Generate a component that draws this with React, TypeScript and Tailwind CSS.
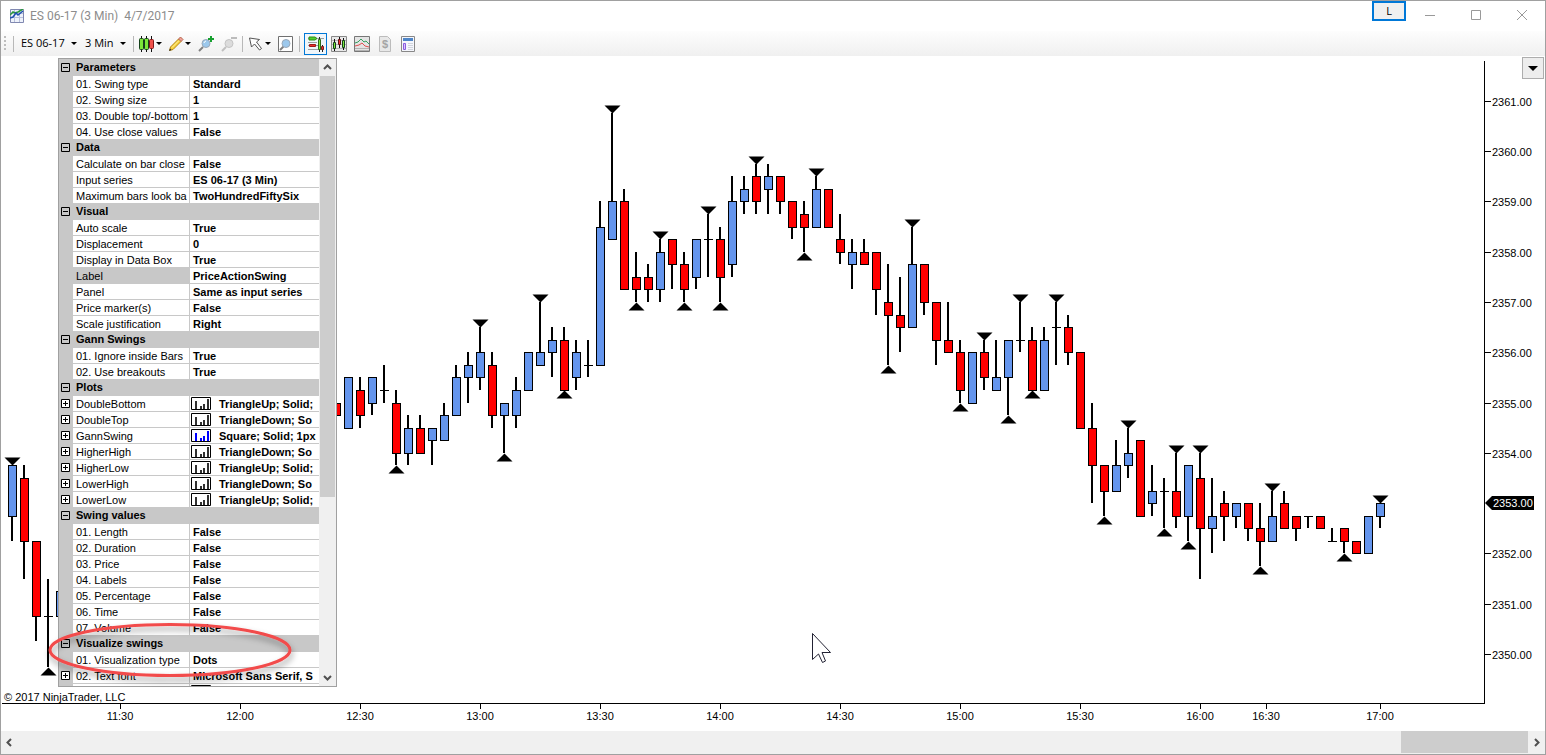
import React, { useState } from 'react';

type Candle = [slot: number, open: number, high: number, low: number, close: number, swing?: 'H' | 'L'];

// Prices are stored as quarter-point ticks above 2350.00
const candles: Candle[] = [
  [0, 11, 15, 9, 15, 'H'], [1, 14, 15, 6, 9], [2, 9, 9, 1, 3], [3, 3, 6, -1, 3, 'L'], [4, 3, 5, 3, 5],
  [27, 20, 20, 19, 19], [28, 18, 22, 18, 22], [29, 21, 22, 18, 19], [30, 20, 22, 19, 22], [31, 21, 23, 20, 21],
  [32, 20, 21, 15, 16, 'L'], [33, 16, 19, 15, 18], [34, 18, 19, 16, 16], [35, 17, 18, 15, 18], [36, 17, 20, 17, 19],
  [37, 19, 23, 19, 22], [38, 22, 24, 20, 23], [39, 22, 26, 21, 24, 'H'], [40, 23, 24, 18, 19], [41, 19, 20, 16, 20, 'L'],
  [42, 19, 22, 18, 21], [43, 21, 24, 21, 24], [44, 23, 28, 23, 24, 'H'], [45, 24, 26, 22, 25], [46, 25, 26, 21, 21, 'L'],
  [47, 22, 25, 21, 24], [48, 23, 25, 22, 23], [49, 23, 36, 23, 34], [50, 33, 43, 33, 36, 'H'], [51, 36, 37, 29, 29],
  [52, 30, 32, 28, 29, 'L'], [53, 30, 31, 28, 29], [54, 29, 33, 28, 32, 'H'], [55, 33, 33, 29, 31], [56, 31, 32, 28, 29, 'L'],
  [57, 30, 33, 29, 33], [58, 33, 35, 30, 33, 'H'], [59, 33, 34, 28, 30, 'L'], [60, 31, 38, 30, 36], [61, 36, 38, 35, 37],
  [62, 38, 39, 35, 36, 'H'], [63, 37, 39, 35, 38], [64, 38, 38, 35, 36], [65, 36, 36, 33, 34], [66, 35, 36, 32, 34, 'L'],
  [67, 34, 38, 34, 37, 'H'], [68, 37, 37, 34, 34], [69, 33, 35, 31, 32], [70, 31, 33, 29, 32], [71, 32, 33, 31, 31],
  [72, 32, 32, 27, 29], [73, 28, 31, 23, 27, 'L'], [74, 27, 30, 24, 26], [75, 26, 34, 26, 31, 'H'], [76, 31, 31, 27, 28],
  [77, 28, 28, 23, 25], [78, 25, 28, 24, 24], [79, 24, 25, 20, 21, 'L'], [80, 20, 24, 20, 24], [81, 24, 25, 21, 22, 'H'],
  [82, 21, 25, 21, 22], [83, 22, 25, 19, 25, 'L'], [84, 25, 28, 24, 25, 'H'], [85, 25, 26, 21, 21, 'L'], [86, 21, 26, 21, 25],
  [87, 26, 28, 23, 26, 'H'], [88, 26, 27, 23, 24], [89, 24, 24, 18, 18], [90, 18, 20, 12, 15], [91, 15, 15, 11, 13, 'L'],
  [92, 13, 17, 13, 15], [93, 15, 18, 14, 16, 'H'], [94, 17, 17, 11, 11], [95, 12, 15, 11, 13], [96, 13, 14, 10, 13, 'L'],
  [97, 13, 16, 10, 11, 'H'], [98, 11, 15, 9, 15, 'L'], [99, 14, 16, 6, 10, 'H'], [100, 10, 14, 8, 11], [101, 12, 13, 9, 11],
  [102, 11, 12, 10, 12], [103, 12, 12, 9, 10], [104, 10, 12, 7, 9, 'L'], [105, 9, 13, 9, 11, 'H'], [106, 12, 13, 10, 10],
  [107, 11, 11, 9, 10], [108, 11, 11, 10, 11], [109, 11, 11, 10, 10], [110, 9, 10, 9, 9], [111, 10, 10, 8, 9, 'L'],
  [112, 9, 9, 8, 8], [113, 8, 11, 8, 11], [114, 11, 12, 10, 12, 'H'],
];

const slotX = (slot: number) => 12 + slot * 12;
const tickY = (tick: number) => Math.round(654 - tick * 12.57);

const priceLabels = [2361, 2360, 2359, 2358, 2357, 2356, 2355, 2354, 2352, 2351, 2350];

const timeLabels = [
  { x: 120, text: '11:30' },
  { x: 240, text: '12:00' },
  { x: 360, text: '12:30' },
  { x: 480, text: '13:00' },
  { x: 600, text: '13:30' },
  { x: 720, text: '14:00' },
  { x: 840, text: '14:30' },
  { x: 960, text: '15:00' },
  { x: 1080, text: '15:30' },
  { x: 1200, text: '16:00' },
  { x: 1266, text: '16:30' },
  { x: 1380, text: '17:00' },
];

type Property = { name: string; value: string; plot?: string; expandable?: boolean; selected?: boolean };
type Category = { title: string; items: Property[] };

const categories: Category[] = [
  {
    title: 'Parameters',
    items: [
      { name: '01. Swing type', value: 'Standard' },
      { name: '02. Swing size', value: '1' },
      { name: '03. Double top/-bottom', value: '1' },
      { name: '04. Use close values', value: 'False' },
    ],
  },
  {
    title: 'Data',
    items: [
      { name: 'Calculate on bar close', value: 'False' },
      { name: 'Input series', value: 'ES 06-17 (3 Min)' },
      { name: 'Maximum bars look ba', value: 'TwoHundredFiftySix' },
    ],
  },
  {
    title: 'Visual',
    items: [
      { name: 'Auto scale', value: 'True' },
      { name: 'Displacement', value: '0' },
      { name: 'Display in Data Box', value: 'True' },
      { name: 'Label', value: 'PriceActionSwing', selected: true },
      { name: 'Panel', value: 'Same as input series' },
      { name: 'Price marker(s)', value: 'False' },
      { name: 'Scale justification', value: 'Right' },
    ],
  },
  {
    title: 'Gann Swings',
    items: [
      { name: '01. Ignore inside Bars', value: 'True' },
      { name: '02. Use breakouts', value: 'True' },
    ],
  },
  {
    title: 'Plots',
    items: [
      { name: 'DoubleBottom', value: 'TriangleUp; Solid;', plot: '#303030', expandable: true },
      { name: 'DoubleTop', value: 'TriangleDown; So', plot: '#303030', expandable: true },
      { name: 'GannSwing', value: 'Square; Solid; 1px', plot: '#0000ff', expandable: true },
      { name: 'HigherHigh', value: 'TriangleDown; So', plot: '#303030', expandable: true },
      { name: 'HigherLow', value: 'TriangleUp; Solid;', plot: '#303030', expandable: true },
      { name: 'LowerHigh', value: 'TriangleDown; So', plot: '#303030', expandable: true },
      { name: 'LowerLow', value: 'TriangleUp; Solid;', plot: '#303030', expandable: true },
    ],
  },
  {
    title: 'Swing values',
    items: [
      { name: '01. Length', value: 'False' },
      { name: '02. Duration', value: 'False' },
      { name: '03. Price', value: 'False' },
      { name: '04. Labels', value: 'False' },
      { name: '05. Percentage', value: 'False' },
      { name: '06. Time', value: 'False' },
      { name: '07. Volume', value: 'False' },
    ],
  },
  {
    title: 'Visualize swings',
    items: [
      { name: '01. Visualization type', value: 'Dots' },
      { name: '02. Text font', value: 'Microsoft Sans Serif, S', expandable: true },
      { name: '', value: '', plot: '#303030' },
    ],
  },
];

/* ---------- small pieces ---------- */

function Caret() {
  return (
    <svg width="6" height="3" viewBox="0 0 6 3" className="shrink-0" aria-hidden="true">
      <path d="M0 0h6L3 3z" fill="#000" />
    </svg>
  );
}

function Separator() {
  return (
    <div className="flex w-[5px] justify-center">
      <div className="h-4 w-px bg-[#b8b8b8]" />
    </div>
  );
}

function Chevron({ d }: { d: string }) {
  return (
    <svg width="9" height="9" viewBox="0 0 9 9" fill="none" stroke="#505050" strokeWidth="2" aria-hidden="true">
      <path d={d} />
    </svg>
  );
}

function ToggleBox({ label, plus = false, onClick }: { label: string; plus?: boolean; onClick?: () => void }) {
  return (
    <button type="button" aria-label={label} onClick={onClick} className="block">
      <svg width="9" height="9" viewBox="0 0 9 9" fill={plus ? '#fff' : 'none'} stroke="#000" className="block" aria-hidden="true">
        <path d="M.5 .5h8v8h-8z" />
        <path d="M2 4.5h5" />
        {plus && <path d="M4.5 2v5" />}
      </svg>
    </button>
  );
}

function Icon({ children }: { children: React.ReactNode }) {
  return (
    <svg width="16" height="16" viewBox="0 0 16 16" fill="none" className="shrink-0" aria-hidden="true">
      {children}
    </svg>
  );
}

function ToolButton({ label, children, menu = false }: { label: string; children: React.ReactNode; menu?: boolean }) {
  return (
    <button
      type="button"
      aria-label={label}
      className={menu ? 'flex h-[22px] w-[29px] items-center gap-px pl-[3px]' : 'flex h-[22px] w-[23px] items-center justify-center'}
    >
      {children}
      {menu && <Caret />}
    </button>
  );
}

function PlotIcon({ color }: { color: string }) {
  return (
    <svg width="20" height="13" viewBox="0 0 20 13" className="shrink-0" aria-hidden="true">
      <path d="M.5 .5h19v12H.5z" fill="#fff" stroke="#000" />
      <path d="M5 4v8M10 9v3M13 7v5M17 2v10" stroke={color} strokeWidth="2" fill="none" />
    </svg>
  );
}

/* ---------- window chrome ---------- */

function TitleBar() {
  return (
    <header className="flex h-[30px] shrink-0 items-start bg-white">
      <div className="flex h-full flex-1 items-center gap-[6px] pl-[9px] font-[Roboto,sans-serif] text-xs text-[#8c8c8c]">
        <svg width="14" height="14" viewBox="0 0 14 14" fill="none" aria-hidden="true">
          <path d="M.5 .5h13v13H.5z" fill="#eef2fb" stroke="#8088b0" />
          <path d="M1 4.500h12M1 8.500h12M4.500 1v12M9.500 1v12" stroke="#b8c0dc" />
          <path d="M0 6l3-3 2 1 3-1 5-3" stroke="#2a9a3a" strokeWidth="1.500" />
          <path d="M0 9l3-1 3-4 2 2 5-4" stroke="#2050b0" strokeWidth="1.500" />
        </svg>
        <h1 className="whitespace-pre">ES 06-17 (3 Min)  4/7/2017</h1>
      </div>
      <button
        type="button"
        className="mr-px h-5 w-[34px] border-2 border-[#0078d7] bg-[#f0f0f0] font-['Open_Sans',sans-serif] text-[11px] leading-4 text-black"
      >
        L
      </button>
      <div className="flex h-[28px] items-center">
        <button type="button" aria-label="Minimize" className="flex w-[46px] justify-center">
          <svg width="10" height="10" viewBox="0 0 10 10" stroke="#999" aria-hidden="true"><path d="M0 5.500h10" /></svg>
        </button>
        <button type="button" aria-label="Maximize" className="flex w-[46px] justify-center">
          <svg width="10" height="10" viewBox="0 0 10 10" fill="none" stroke="#999" aria-hidden="true"><path d="M.5 .5h9v9h-9z" /></svg>
        </button>
        <button type="button" aria-label="Close" className="flex w-[46px] justify-center">
          <svg width="10" height="10" viewBox="0 0 10 10" stroke="#999" aria-hidden="true"><path d="M0 0l10 10M10 0L0 10" /></svg>
        </button>
      </div>
    </header>
  );
}

function Toolbar() {
  return (
    <div
      role="toolbar"
      aria-label="Chart toolbar"
      className="flex h-[25px] shrink-0 items-center bg-linear-to-b from-[#fdfdfd] to-[#f0f0f0] font-['Open_Sans',sans-serif] text-[11px] text-black"
    >
      <div className="w-[10px] pl-[3px]">
        <svg width="2" height="16" viewBox="0 0 2 16" className="block" aria-hidden="true">
          <path d="M0 1h2M0 5h2M0 9h2M0 13h2" stroke="#bdbdbd" strokeWidth="2" />
        </svg>
      </div>
      <Separator />
      <button type="button" className="flex h-[22px] w-[64px] items-center gap-[6px] pl-[5px] whitespace-nowrap">
        ES 06-17 <Caret />
      </button>
      <button type="button" className="flex h-[22px] w-[51px] items-center gap-[6px] pl-[5px] whitespace-nowrap">
        3 Min <Caret />
      </button>
      <Separator />
      <ToolButton label="Chart style" menu>
        <Icon>
          <path d="M2.500 0v16M7.500 0v16M12.500 0v16" stroke="#111" />
          <rect x=".5" y="2.500" width="4" height="11" rx="1" fill="#7be838" stroke="#14401a" />
          <rect x="5.500" y="2.500" width="4" height="11" rx="1" fill="#7be838" stroke="#14401a" />
          <rect x="10.500" y="3.500" width="4" height="9" rx="1" fill="#f0504a" stroke="#801818" />
        </Icon>
      </ToolButton>
      <ToolButton label="Drawing tools" menu>
        <Icon>
          <path d="M2.500 11L10.500 3l2.500 2.500-8 8-3.500 1z" fill="#f7d23c" stroke="#b58512" />
          <path d="M10.500 3l2-2 2.500 2.500-2 2z" fill="#f0a098" stroke="#b5654a" />
          <path d="M4 11.500l7-7" stroke="#fff2a0" />
          <path d="M1 15l1-2.500L3.500 14z" fill="#333" />
        </Icon>
      </ToolButton>
      <ToolButton label="Zoom in">
        <Icon>
          <path d="M5 11l-4 4" stroke="#808080" strokeWidth="2" />
          <circle cx="8" cy="7.500" r="4" fill="#9cc8ec" stroke="#9aa8b8" />
          <path d="M6 7a2.500 2.500 0 0 1 2-2" stroke="#fff" />
          <path d="M13 0v6M10 3h6" stroke="#18a030" strokeWidth="2" />
        </Icon>
      </ToolButton>
      <ToolButton label="Zoom out">
        <Icon>
          <path d="M5 11l-4 4" stroke="#c0c0c0" strokeWidth="2" />
          <circle cx="8" cy="7.500" r="4" fill="#dcdcdc" stroke="#c4c4c4" />
          <path d="M10 2h6" stroke="#bcbcbc" strokeWidth="2" />
        </Icon>
      </ToolButton>
      <Separator />
      <ToolButton label="Cursor" menu>
        <Icon>
          <path d="M1.500 2l10 1.500L8.500 6l5 6.500-2 1.500-5-6L3.500 11z" fill="#fff" stroke="#555" />
        </Icon>
      </ToolButton>
      <ToolButton label="Zoom frame">
        <Icon>
          <path d="M.5 .5h14v15H.5z" fill="#fff" stroke="#707070" />
          <path d="M5.500 10.500l-3.500 3.500" stroke="#808080" strokeWidth="2" />
          <circle cx="8" cy="7.500" r="4" fill="#9cc8ec" stroke="#9aa8b8" />
        </Icon>
      </ToolButton>
      <Separator />
      <button
        type="button"
        aria-label="Chart trader"
        aria-pressed="true"
        className="ml-[2px] flex h-[22px] w-[23px] items-center justify-center border border-[#0078d7] bg-[#f0f6fa]"
      >
        <Icon>
          <path d="M0 2.500h16M0 6.500h9M0 9.500h10M0 13.500h16" stroke="#9aa0a0" />
          <path d="M1 1h6l2 1.500L7 4H1z" fill="#52d02a" stroke="#2f8a1a" />
          <path d="M1.500 8.500h6v2h-6z" fill="#ee3030" stroke="#a01818" />
          <path d="M11.500 1v15M14.500 9v7" stroke="#222" />
          <path d="M10.500 3.500h2v10h-2z" fill="#7be838" stroke="#2f6a1a" />
          <path d="M13.500 10.500h2v3h-2z" fill="#ee3030" stroke="#802020" />
        </Icon>
      </button>
      <ToolButton label="Data series">
        <Icon>
          <path d="M.5 .5h15v15H.5z" fill="#e8e8e8" stroke="#888" />
          <path d="M1 4.500h14M1 8.500h14M1 12.500h14" stroke="#b4b4b4" />
          <path d="M3.500 3v12M8.500 1v11M12.500 2v12" stroke="#111" />
          <path d="M2.500 6.500h2v6h-2zM11.500 4.500h2v7h-2z" fill="#7be838" stroke="#14401a" />
          <path d="M7.500 3.500h2v5h-2z" fill="#ee3030" stroke="#601010" />
        </Icon>
      </ToolButton>
      <ToolButton label="Indicators">
        <Icon>
          <path d="M.5 .5h15v15H.5z" fill="#e4e4e4" stroke="#777" />
          <path d="M1 12.500h14M1 14.500h14" stroke="#b4b4b4" />
          <path d="M1 7l3-1 3-3 3 3 2-1 3 3" stroke="#35a060" />
          <path d="M1 10l4-1 3-2 3 3 4 1" stroke="#e05050" />
        </Icon>
      </ToolButton>
      <ToolButton label="Strategies">
        <svg width="16" height="16" viewBox="0 0 16 16" fill="none" className="shrink-0" aria-hidden="true">
          <path d="M2.500 .5h8l3 3v12h-11z" fill="#e8e8e8" stroke="#bcbcbc" />
          <text x="8" y="12" textAnchor="middle" fontSize="11" fontWeight="bold" fontFamily="Liberation Sans, sans-serif" fill="#a4a4a4">$</text>
        </svg>
      </ToolButton>
      <ToolButton label="Properties">
        <Icon>
          <path d="M1.500 .5h13v15h-13z" fill="#f4f6fc" stroke="#888" />
          <path d="M3 2h10v3H3z" fill="#4f86c8" />
          <path d="M3.500 7.500h2v6h-2z" fill="#d8c4f8" stroke="#8a5ce0" />
          <path d="M8 7.500h5M8 9.500h5M8 11.500h5M8 13.500h5" stroke="#d0d4dc" />
        </Icon>
      </ToolButton>
    </div>
  );
}

/* ---------- chart ---------- */

function CandleShape({ candle }: { candle: Candle }) {
  const [slot, open, high, low, close, swing] = candle;
  const x = slotX(slot);
  const top = tickY(Math.max(open, close));
  const bottom = tickY(Math.min(open, close));
  const highY = tickY(high);
  const lowY = tickY(low);

  return (
    <g>
      <rect x={x - 1} y={highY} width={2} height={lowY - highY} fill="#000" />
      {open === close ? (
        <rect x={x - 4} y={top} width={9} height={1} fill="#000" />
      ) : (
        <rect x={x - 3.5} y={top + 0.5} width={8} height={bottom - top} fill={close > open ? '#6495ed' : '#ff0000'} stroke="#000" />
      )}
      {swing === 'H' && <path d={`M${x - 7.5} ${highY - 7.5}h16l-8 8z`} fill="#000" />}
      {swing === 'L' && <path d={`M${x + 0.5} ${lowY + 0.5}l8 8h-16z`} fill="#000" />}
    </g>
  );
}

function PriceChart() {
  return (
    <svg
      viewBox="1 56 1544 675"
      preserveAspectRatio="xMinYMin meet"
      className="block h-full w-full font-['Liberation_Sans',Arial,sans-serif] text-[11px]"
      role="img"
      aria-label="ES 06-17 three minute candlestick chart"
    >
      {candles.map((candle) => (
        <CandleShape key={candle[0]} candle={candle} />
      ))}

      {/* price axis */}
      <rect x="1484" y="61" width="1" height="643" fill="#000" />
      {priceLabels.map((price) => (
        <g key={price}>
          <rect x="1485" y={tickY((price - 2350) * 4)} width="6" height="1" fill="#000" />
          <text x="1492" y={tickY((price - 2350) * 4) + 5}>{price.toFixed(2)}</text>
        </g>
      ))}
      <path d="M1485 503l7-7h42v14h-42z" fill="#000" />
      <text x="1493" y="507" fill="#fff">2353.00</text>

      {/* time axis */}
      <rect x="2" y="703" width="1482" height="1" fill="#000" />
      {timeLabels.map(({ x, text }) => (
        <g key={text}>
          <rect x={x} y="704" width="1" height="5" fill="#000" />
          <text x={x} y="720" textAnchor="middle">{text}</text>
        </g>
      ))}
      <text x="4" y="701">© 2017 NinjaTrader, LLC</text>

      {/* mouse pointer */}
      <path d="M812.500 633.500v26l6-5.500 4 8.500 3-1.500-3.500-8.500h8.500z" fill="#fff" stroke="#223" />
    </svg>
  );
}

/* ---------- indicator properties ---------- */

function PropertyRow({ item }: { item: Property }) {
  return (
    <tr>
      <td className="bg-[#c8c8c8] p-0 pt-[3px] pl-[2px] align-top">
        {item.expandable && <ToggleBox label={`Expand ${item.name}`} plus />}
      </td>
      <th
        scope="row"
        className={`h-4 overflow-hidden border-r border-b border-[#c8c8c8] p-0 pt-px pl-[3px] text-left align-top leading-[14px] font-normal whitespace-nowrap ${item.selected ? 'bg-[#c8c8c8]' : 'bg-white'}`}
      >
        {item.name}
      </th>
      <td className="h-4 overflow-hidden border-b border-[#c8c8c8] bg-white p-0 pt-px align-top leading-[14px] font-bold whitespace-nowrap">
        {item.plot ? (
          <div className="flex items-start gap-2 pl-px">
            <PlotIcon color={item.plot} />
            <span>{item.value}</span>
          </div>
        ) : (
          <div className="pl-[3px]">{item.value}</div>
        )}
      </td>
    </tr>
  );
}

function PropertyGrid() {
  const [collapsed, setCollapsed] = useState<string[]>([]);

  const toggle = (title: string) =>
    setCollapsed((prev) => (prev.includes(title) ? prev.filter((t) => t !== title) : [...prev, title]));

  return (
    <section
      aria-label="Indicator properties"
      className="absolute top-[2px] left-[57px] flex h-[629px] w-[279px] border border-[#a0a0a0] bg-[#c8c8c8] font-['Liberation_Sans',Arial,sans-serif] text-[11px] text-black"
    >
      <div className="min-w-0 flex-1 overflow-hidden pt-px">
        <table className="w-full table-fixed border-separate border-spacing-0">
          <colgroup>
            <col className="w-[14px]" />
            <col className="w-[117px]" />
            <col />
          </colgroup>
          {categories.map(({ title, items }) => (
            <tbody key={title}>
              <tr className="bg-[#c8c8c8]">
                <td className="p-0 pt-[3px] pl-[2px] align-top">
                  <ToggleBox label={`Toggle ${title}`} onClick={() => toggle(title)} />
                </td>
                <th scope="rowgroup" colSpan={2} className="h-4 p-0 pl-[3px] text-left align-top leading-[14px] font-bold">
                  {title}
                </th>
              </tr>
              {!collapsed.includes(title) && items.map((item) => <PropertyRow key={item.name} item={item} />)}
            </tbody>
          ))}
        </table>
      </div>
      <div className="flex w-[17px] flex-col border-r border-l border-[#f0f0f0] bg-[#f0f0f0]">
        <button type="button" aria-label="Scroll up" className="flex h-[17px] items-center justify-center">
          <Chevron d="M1 6l3.500-3.500L8 6" />
        </button>
        <div className="flex-1">
          <div className="h-[71%] bg-[#cdcdcd]" />
        </div>
        <button type="button" aria-label="Scroll down" className="flex h-[17px] items-center justify-center">
          <Chevron d="M1 3l3.500 3.500L8 3" />
        </button>
      </div>
    </section>
  );
}

// Hand-drawn style ring around the "Visualize swings" group
function Callout() {
  return (
    <svg width="260" height="72" viewBox="0 0 260 72" fill="none" className="pointer-events-none absolute top-[560px] left-[40px]" aria-hidden="true">
      <defs>
        <filter id="ringShadow" x="-10%" y="-20%" width="120%" height="150%">
          <feDropShadow dx="1" dy="4" stdDeviation="3" floodColor="#000" floodOpacity="0.4" />
        </filter>
      </defs>
      <ellipse cx="129" cy="34" rx="120" ry="25.500" stroke="#f24b4b" strokeWidth="3" filter="url(#ringShadow)" />
    </svg>
  );
}

function TimeScrollbar() {
  return (
    <div className="flex h-[23px] shrink-0 items-stretch bg-[#f0f0f0]">
      <button type="button" aria-label="Scroll left" className="flex w-[17px] items-center justify-center">
        <Chevron d="M6 1L2.500 4.500 6 8" />
      </button>
      <div className="flex flex-1 justify-end pb-px">
        <div className="w-[127px] bg-[#cdcdcd]" />
      </div>
      <button type="button" aria-label="Scroll right" className="flex w-[17px] items-center justify-center">
        <Chevron d="M3 1l3.500 3.500L3 8" />
      </button>
    </div>
  );
}

export default function App() {
  return (
    <div className="flex h-screen flex-col overflow-hidden border border-[#a0a0a0] bg-white">
      <TitleBar />
      <Toolbar />
      <main className="relative min-h-0 flex-1">
        <PriceChart />
        <PropertyGrid />
        <Callout />
        <button
          type="button"
          aria-label="Chart menu"
          className="absolute top-px right-px flex h-[22px] w-[22px] items-center justify-center border border-[#adadad] bg-[#ededed]"
        >
          <svg width="10" height="5" viewBox="0 0 10 5" aria-hidden="true"><path d="M0 0h10L5 5z" fill="#000" /></svg>
        </button>
      </main>
      <TimeScrollbar />
    </div>
  );
}
